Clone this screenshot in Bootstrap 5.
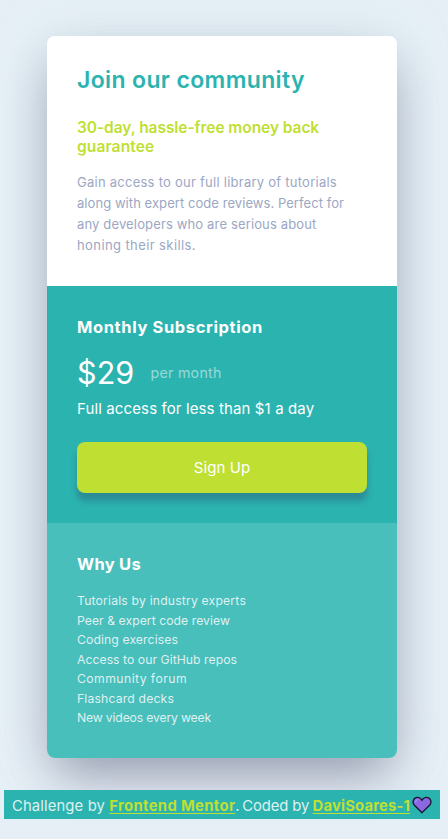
<!DOCTYPE html>
<html lang="en">
<head>
<meta charset="utf-8">
<meta name="viewport" content="width=device-width, initial-scale=1">
<title>Join our community</title>
<link href="https://cdn.jsdelivr.net/npm/bootstrap@5.3.0/dist/css/bootstrap.min.css" rel="stylesheet">
<style>
:root{--cyan:#2bb3b0;--cyan-light:#48bfbb;--lime:#bfdf32;--mist:#e6eff6}
body{background:var(--mist);font-family:Inter,sans-serif;min-height:839px;overflow:hidden}
.line{display:block;white-space:nowrap}
.plan-card{width:350px;margin:36px 0 0 47px;border-radius:8px;box-shadow:0 0 50px rgba(200,230,228,.35),0 20px 45px -12px rgba(50,40,80,.45),0 24px 50px -8px rgba(50,50,93,.16)}
.plan-card>section{padding:0 30px}
.intro{height:250px;background:#fff;border-radius:8px 8px 0 0}
.intro h1{font-size:23px;font-weight:600;line-height:30px;padding-top:29px;color:var(--cyan);letter-spacing:.36px}
.intro h2{font-size:15.5px;font-weight:600;line-height:19px;margin-top:23px;color:var(--lime)}
.intro p{font-size:13px;line-height:21px;margin-top:16px;color:#9ca7c3}
.monthly{height:237px;background:var(--cyan);color:#fff}
.plan-title{font-size:16.5px;font-weight:700;line-height:22px;padding-top:30px;letter-spacing:.617px;color:#fff}
.why .plan-title{letter-spacing:.286px}
.price-row{height:46px;margin-top:12px}
.price{font-size:30.5px;line-height:46px;letter-spacing:.1px;width:73.5px}
.period{font-size:14.2px;letter-spacing:.28px;opacity:.5}
.access{font-size:15px;line-height:22px;margin-top:2px;letter-spacing:.12px}
.signup,.signup:hover{height:51px;margin-top:22px;padding-top:8px;background:var(--lime);border:0;border-radius:8px;color:#fff;font-size:15px;letter-spacing:.087px;box-shadow:0 8px 6px rgba(44,90,120,.45)}
.why{height:235px;background:var(--cyan-light);color:#fff;border-radius:0 0 8px 8px}
.why ul{font-size:12.2px;line-height:19.5px;margin-top:16px;color:#dff1f2}
.credit{position:relative;width:436px;height:29px;margin:32px 0 0 4px;padding:2px 0 0 8px;background:var(--cyan);color:#dff1f2;font-size:14.8px;line-height:28px;white-space:pre}
.credit a{color:var(--lime);font-weight:700;text-decoration:underline;text-decoration-thickness:1px;text-underline-offset:2px;text-decoration-skip-ink:none}
.seg1{width:97.3px;letter-spacing:.137px}.seg2{width:126px}.seg3{width:7px}.seg4{width:70.3px;letter-spacing:-.086px}.seg5{width:99px}
.seg2 a{letter-spacing:.355px}.seg5 a{letter-spacing:.168px}
.s1{letter-spacing:-.06px}.s2{letter-spacing:.13px}
.p1{letter-spacing:.253px}.p2{letter-spacing:.061px}.p3{letter-spacing:.146px}.p4{letter-spacing:.405px}
.l1{letter-spacing:.184px}.l2{letter-spacing:.054px}.l3{letter-spacing:.104px}.l4{letter-spacing:.048px}.l5{letter-spacing:.443px}.l6{letter-spacing:.168px}.l7{letter-spacing:-.158px}
</style>
</head>
<body>
<main class="d-flex">
<div class="plan-card">
<section class="intro">
<h1 class="mb-0 text-nowrap">Join our community</h1>
<h2 class="mb-0"><span class="line s1">30-day, hassle-free money back</span> <span class="line s2">guarantee</span></h2>
<p class="mb-0"><span class="line p1">Gain access to our full library of tutorials</span> <span class="line p2">along with expert code reviews. Perfect for</span> <span class="line p3">any developers who are serious about</span> <span class="line p4">honing their skills.</span></p>
</section>
<section class="monthly">
<h3 class="plan-title mb-0">Monthly Subscription</h3>
<div class="price-row d-flex align-items-center"><span class="price">$29</span><span class="period">per month</span></div>
<p class="access mb-0">Full access for less than $1 a day</p>
<button type="button" class="btn signup w-100 d-block">Sign Up</button>
</section>
<section class="why">
<h3 class="plan-title mb-0">Why Us</h3>
<ul class="list-unstyled mb-0"><li class="l1">Tutorials by industry experts</li><li class="l2">Peer &amp; expert code review</li><li class="l3">Coding exercises</li><li class="l4">Access to our GitHub repos</li><li class="l5">Community forum</li><li class="l6">Flashcard decks</li><li class="l7">New videos every week</li></ul>
</section>
</div>
</main>
<footer class="credit d-flex"><span class="seg1">Challenge by </span><span class="seg2"><a href="#">Frontend Mentor</a></span><span class="seg3">.</span><span class="seg4">Coded by </span><span class="seg5"><a href="#">DaviSoares-1</a></span><svg class="mt-1 flex-shrink-0" width="20" height="18" viewBox="0 0 20 18"><path d="M10 16.700 2.400 9.300C.1 6.800.9 2.700 4 1.700c2.400-.7 4.600.3 6 2.500 1.400-2.200 3.600-3.200 6-2.500 3.100 1 3.900 5.100 1.600 7.600Z" fill="#8b68e0" stroke="#17132b" stroke-width="1.300"/><path d="M3.700 6.500c-.1-1.700.8-2.900 2.500-2.800" fill="none" stroke="#a88bf0" stroke-width="1.300"/></svg></footer>
<script src="https://cdn.jsdelivr.net/npm/bootstrap@5.3.0/dist/js/bootstrap.bundle.min.js"></script>
</body>
</html>
